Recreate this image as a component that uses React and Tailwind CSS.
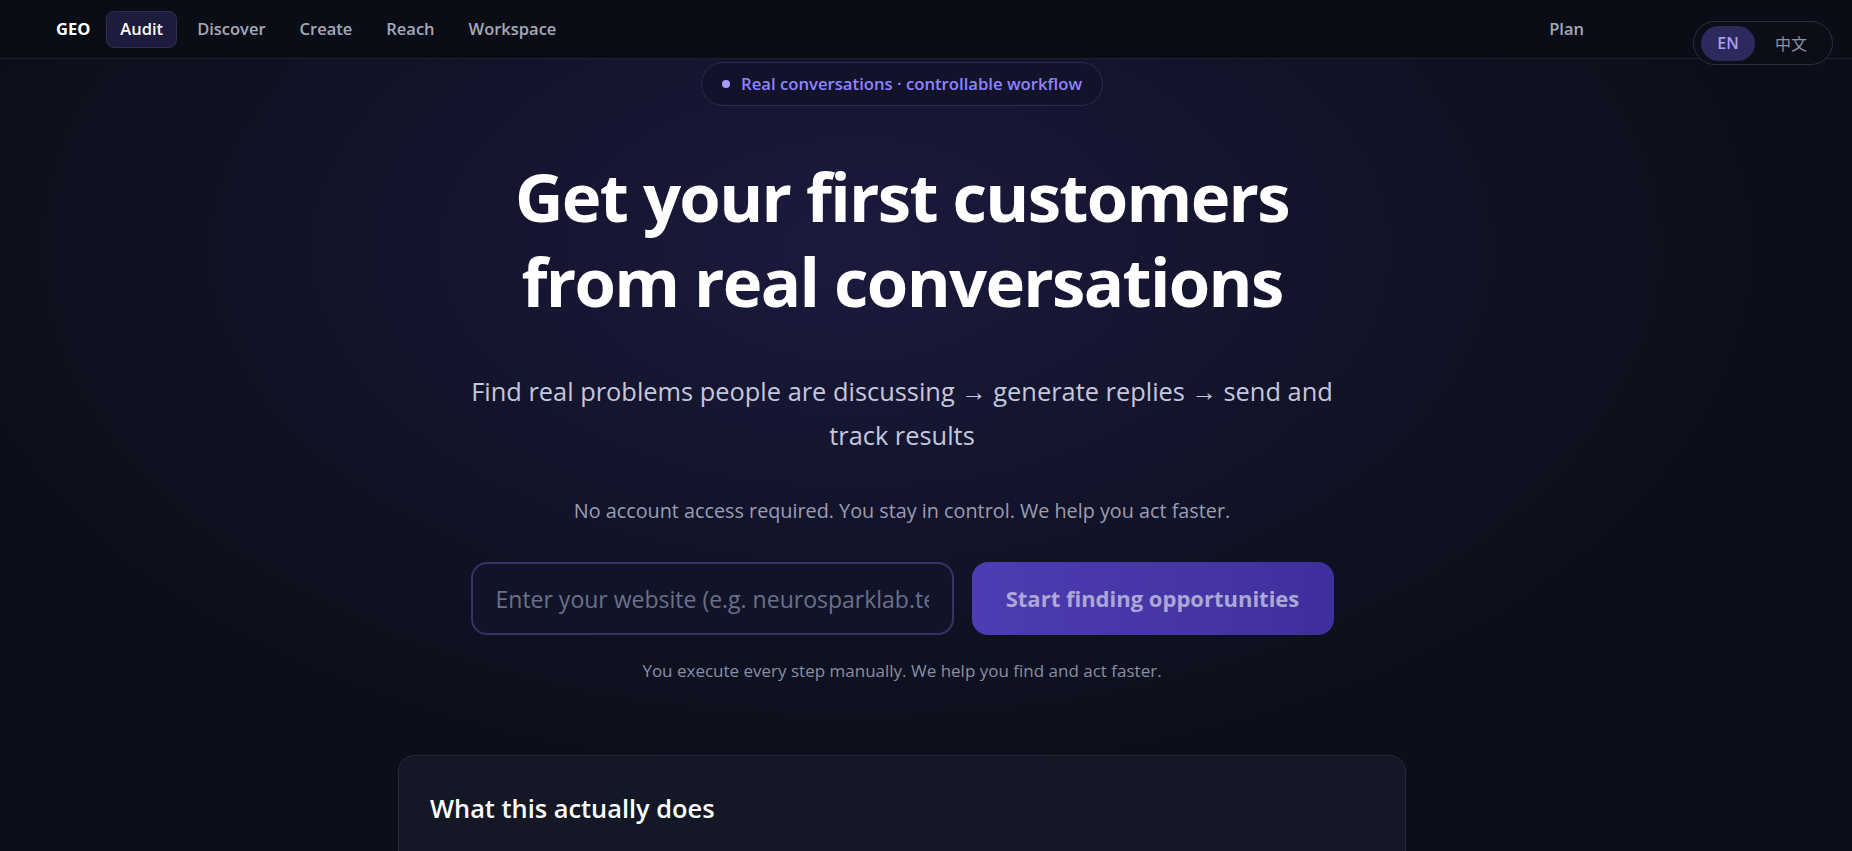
import React from "react";

const NAV = ["Discover", "Create", "Reach", "Workspace"];

const App = () => {
  return (
    <div className="min-h-[851px] w-full overflow-hidden bg-[#0c0f1a] bg-[radial-gradient(ellipse_900px_520px_at_46%_26%,#1b1a3e_0%,#14152f_40%,#0c0f1a_100%)] font-['Open_Sans',sans-serif] relative">
      {/* top nav */}
      <nav className="h-[59px] flex items-center pl-[56px] pr-[255px] bg-[#0a0d16] border-b border-[#1b1f2e]">
        <span className="text-[16.5px] font-bold text-white mr-[16px]">GEO</span>
        <div className="flex items-center gap-[6px]">
          <span className="h-[37px] px-[13px] flex items-center rounded-lg bg-[#1c1c3c] border border-[#2d2d55] text-[16.5px] font-semibold text-white">
            Audit
          </span>
          {NAV.map((n) => (
            <span
              key={n}
              className="h-[37px] px-[13px] flex items-center rounded-lg border border-transparent text-[16.5px] font-semibold text-[#a4a9ba]"
            >
              {n}
            </span>
          ))}
        </div>
        <span className="ml-auto h-[37px] px-[13px] flex items-center text-[16.5px] font-semibold text-[#a4a9ba]">
          Plan
        </span>
      </nav>

      {/* language toggle */}
      <div className="absolute top-[21px] right-[19px] w-[140px] h-[44px] rounded-full border border-[#2b2e40] bg-[#0b0e17] flex items-center pl-[7px] gap-[20px]">
        <span className="h-[35px] w-[54px] rounded-full bg-[#2c2a5c] flex items-center justify-center text-[16px] font-semibold text-[#a49dff]">
          EN
        </span>
        <span className="text-[16px] text-[#8d92a6] font-['Noto_Sans_CJK_SC',sans-serif]">
          中文
        </span>
      </div>

      {/* hero */}
      <main className="flex flex-col items-center pr-12">
        <div className="mt-[3px] h-[44px] px-[20px] flex items-center gap-[11px] rounded-full border border-[#2b2b4f] bg-[#12132b]">
          <span className="w-[8px] h-[8px] rounded-full bg-[#a49dff]" />
          <span className="text-[16.7px] font-semibold text-[#8f83ff]">
            Real conversations · controllable workflow
          </span>
        </div>

        <h1 className="mt-[48px] text-center text-[67px] leading-[85px] font-bold tracking-tight text-white">
          Get your first customers
          <br />
          from real conversations
        </h1>

        <p className="mt-[45px] max-w-[890px] text-center text-[25.4px] leading-[44px] text-[#c5c8dc]">
          Find real problems people are discussing → generate replies → send and track results
        </p>

        <p className="mt-[40px] text-[19.8px] leading-[28px] text-[#9a9eb4]">
          No account access required. You stay in control. We help you act faster.
        </p>

        <div className="mt-[37px] flex gap-[18px]">
          <input
            placeholder="Enter your website (e.g. neurosparklab.tech)"
            className="w-[483px] h-[73px] rounded-2xl border-2 border-[#36326a] bg-[#111428] px-[23px] text-[23px] text-white placeholder:text-[#6c7089] outline-none"
          />
          <button className="w-[362px] h-[73px] rounded-2xl bg-gradient-to-r from-[#4d3cb3] via-[#4636a8] to-[#3f2f9d] text-[22px] font-bold text-[#aca8d6]">
            Start finding opportunities
          </button>
        </div>

        <p className="mt-[24px] text-[17px] leading-[24px] text-[#8a8ea6]">
          You execute every step manually. We help you find and act faster.
        </p>

        <section className="mt-[72px] w-[1008px] h-[200px] rounded-2xl border border-[#242839] bg-[#141726] px-[31px] pt-[36px]">
          <h2 className="text-[25.4px] leading-[32px] font-semibold text-white">
            What this actually does
          </h2>
        </section>
      </main>
    </div>
  );
};

export default App;
